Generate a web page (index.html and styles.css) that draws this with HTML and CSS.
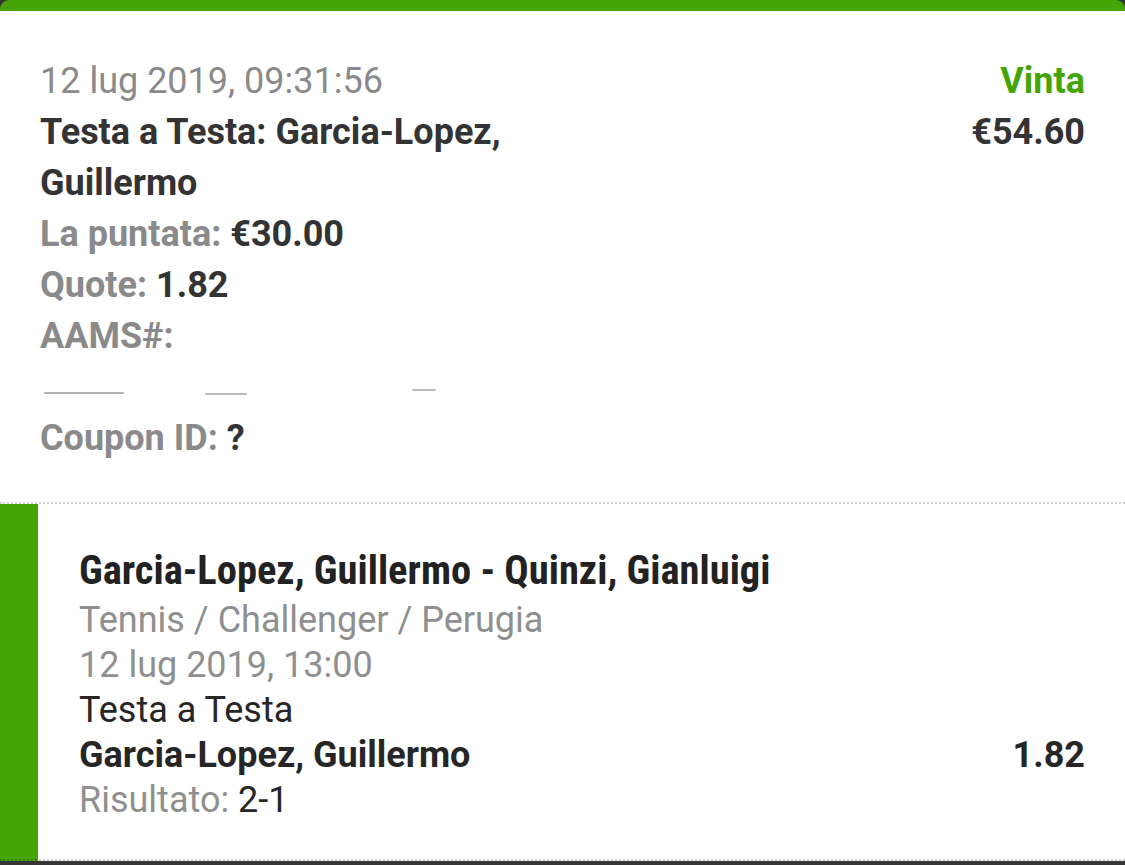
FILE: index.html
```html
<!DOCTYPE html>
<html lang="it">
<head>
  <meta charset="UTF-8" />
  <title>Dettaglio scommessa</title>
  <link rel="stylesheet" href="styles.css">
</head>
<body>
  <!-- BET CARD -->
  <div class="card">

    <!-- SUMMARY -->
    <section class="summary">
      <div class="row">
        <div class="date">12 lug 2019, 09:31:56</div>
        <div class="status">Vinta</div>
      </div>
      <div class="row">
        <div class="bet-name">Testa a Testa: Garcia-Lopez, Guillermo</div>
        <div class="amount">€54.60</div>
      </div>
      <div class="line"><span class="label">La puntata:</span> <span class="value">€30.00</span></div>
      <div class="line"><span class="label">Quote:</span> <span class="value">1.82</span></div>
      <div class="line"><span class="label">AAMS#:</span></div>
      <!-- wiped out in the original -->
      <div class="redacted">
        <span class="scrap s1"></span>
        <span class="scrap s2"></span>
        <span class="scrap s3"></span>
      </div>
      <div class="line"><span class="label">Coupon ID:</span> <span class="value">?</span></div>
    </section>

    <!-- EVENT DETAIL -->
    <section class="detail">
      <div class="match">Garcia-Lopez, Guillermo - Quinzi, Gianluigi</div>
      <div class="muted">Tennis / Challenger / Perugia</div>
      <div class="muted">12 lug 2019, 13:00</div>
      <div>Testa a Testa</div>
      <div class="row pick">
        <span>Garcia-Lopez, Guillermo</span>
        <span>1.82</span>
      </div>
      <div><span class="muted">Risultato:</span> 2-1</div>
    </section>

  </div>
</body>
</html>
```

FILE: styles.css
```css
/* ———————————————— */
/* BASE */
/* ———————————————— */
body {
  margin: 0;
  background: #353535;
  font-family: Roboto, 'Noto Sans', sans-serif;
  font-size: 36px;
  color: #2d2d2d;
}

.card {
  background: #fff;
  border-top: 11px solid #45a507;
  border-radius: 9px 9px 0 0;
  overflow: hidden;
}

.row {
  display: flex;
  justify-content: space-between;
  align-items: flex-start;
}

/* ———————————————— */
/* SUMMARY */
/* ———————————————— */
.summary {
  padding: 45px 40px 38px;
  line-height: 51px;
  border-bottom: 2px dotted #cfcfcf;
}
.date { color: #8a8a8a; }
.status {
  color: #45a507;
  font-weight: 700;
}
.bet-name {
  width: 560px;
  font-weight: 700;
  color: #333;
}
.amount {
  font-weight: 700;
  color: #333;
}
.line { font-weight: 700; }
.label { color: #8a8a8a; }
.value { color: #333; }

.redacted {
  height: 51px;
  position: relative;
}
.scrap {
  position: absolute;
  height: 2px;
  background: #666;
  border-radius: 2px;
}
.scrap.s1 { left: 4px; top: 30px; width: 80px; opacity: .5; }
.scrap.s2 { left: 165px; top: 31px; width: 42px; opacity: .45; }
.scrap.s3 { left: 372px; top: 27px; width: 24px; opacity: .45; }

/* ———————————————— */
/* EVENT DETAIL */
/* ———————————————— */
.detail {
  padding: 39px 40px 36px 79px;
  line-height: 45px;
  color: #262626;
  background: linear-gradient(to right, #45a507 38px, #fff 38px);
  border-bottom: 2px dotted rgba(0, 0, 0, 0.2);
}
.match {
  font-family: 'Roboto Condensed', Roboto, sans-serif;
  font-stretch: condensed;
  font-size: 40.5px;
  font-weight: 700;
  line-height: 55px;
  color: #222;
}
.muted { color: #8f8f8f; }
.pick { font-weight: 700; }
```
